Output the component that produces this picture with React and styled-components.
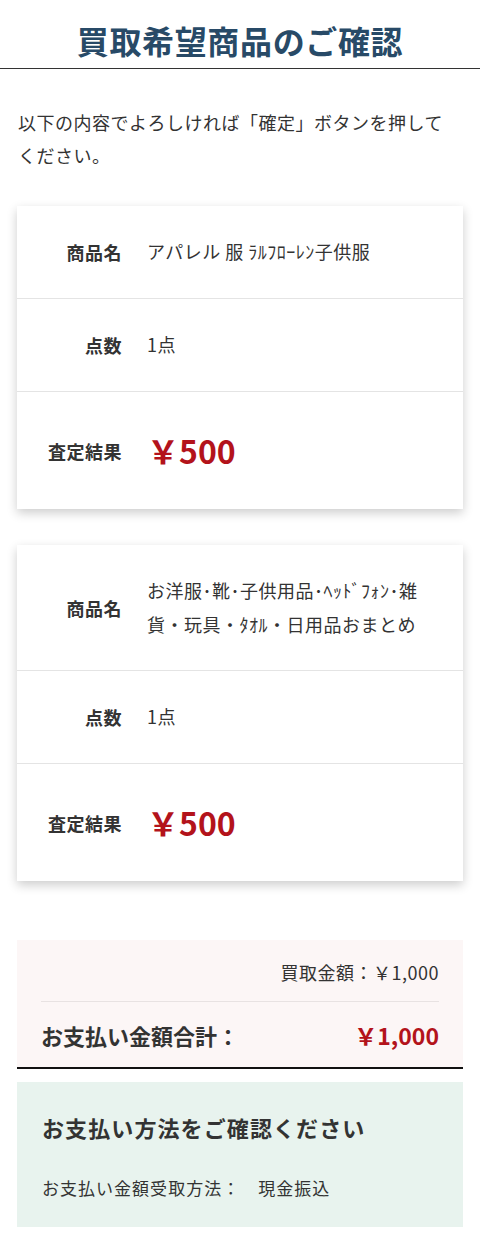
import React from "react";
import styled, { createGlobalStyle } from "styled-components";

const items = [
  {
    name: "アパレル 服 ﾗﾙﾌﾛｰﾚﾝ子供服",
    count: "1点",
    price: "￥500",
  },
  {
    name: "お洋服･靴･子供用品･ﾍｯﾄﾞﾌｫﾝ･雑貨・玩具・ﾀｵﾙ・日用品おまとめ",
    count: "1点",
    price: "￥500",
  },
];

export default function App() {
  return (
    <>
      <GlobalStyle />
      <Page>
        <Title>買取希望商品のご確認</Title>
        <Container>
          <Lead>
            以下の内容でよろしければ「確定」ボタンを押してください。
          </Lead>

          {items.map((item, i) => (
            <Card key={i}>
              <Row>
                <Label>商品名</Label>
                <Value>{item.name}</Value>
              </Row>
              <Row>
                <Label>点数</Label>
                <Value>{item.count}</Value>
              </Row>
              <Row>
                <Label>査定結果</Label>
                <Price>{item.price}</Price>
              </Row>
            </Card>
          ))}

          <Summary>
            <SubTotal>買取金額：￥1,000</SubTotal>
            <Total>
              <TotalLabel>お支払い金額合計：</TotalLabel>
              <TotalPrice>￥1,000</TotalPrice>
            </Total>
          </Summary>

          <PayBox>
            <PayTitle>お支払い方法をご確認ください</PayTitle>
            <PayText>
              お支払い金額受取方法：<PayMethod>現金振込</PayMethod>
            </PayText>
          </PayBox>
        </Container>
      </Page>
    </>
  );
}

const GlobalStyle = createGlobalStyle`
  body {
    margin: 0;
    background: #fff;
    font-family: "Noto Sans CJK JP", "Noto Sans", sans-serif;
    color: #333;
  }
`;

const Page = styled.div`
  width: 480px;
  padding-bottom: 19px;
`;

const Title = styled.h1`
  margin: 0;
  padding: 16px 0 4px;
  font-size: 32px;
  line-height: 48px;
  font-weight: 700;
  letter-spacing: 0.02em;
  color: #284a67;
  text-align: center;
  border-bottom: 1px solid #333;
`;

const Container = styled.div`
  padding: 0 17px;
`;

const Lead = styled.p`
  margin: 37px 0 34px;
  padding: 0 3px 0 1px;
  font-size: 18px;
  line-height: 33px;
  letter-spacing: 0.5px;
  color: #333;
`;

const Card = styled.div`
  background: #fff;
  box-shadow: 0 4px 10px rgba(0, 0, 0, 0.2);
  margin-bottom: 36px;
`;

const Row = styled.div`
  display: grid;
  grid-template-columns: 105px 1fr;
  column-gap: 25px;
  align-items: center;
  padding: 29px 36px 29px 0;
  & + & {
    border-top: 1px solid #e4e4e4;
  }
`;

const Label = styled.div`
  text-align: right;
  font-size: 18px;
  font-weight: 700;
  line-height: 34px;
  letter-spacing: 0.5px;
  color: #333;
`;

const Value = styled.div`
  font-size: 18px;
  line-height: 33.5px;
  letter-spacing: 0.5px;
  color: #333;
`;

const Price = styled.div`
  font-size: 32px;
  font-weight: 700;
  line-height: 59px;
  color: #b3131b;
`;

const Summary = styled.div`
  margin-top: 59px;
  background: #fcf6f6;
  padding: 17px 24px 15px;
  border-bottom: 2px solid #111;
`;

const SubTotal = styled.div`
  text-align: right;
  font-size: 18px;
  line-height: 30px;
  letter-spacing: 0.5px;
  padding-bottom: 14px;
  border-bottom: 1px solid #e8e2e2;
  color: #333;
`;

const Total = styled.div`
  display: flex;
  justify-content: space-between;
  align-items: center;
  padding-top: 16px;
  line-height: 34px;
`;

const TotalLabel = styled.span`
  font-size: 22px;
  font-weight: 700;
  color: #333;
`;

const TotalPrice = styled.span`
  font-size: 23px;
  font-weight: 700;
  color: #b3131b;
`;

const PayBox = styled.div`
  margin-top: 13px;
  background: #e8f3ee;
  padding: 28px 25px 25px;
`;

const PayTitle = styled.h2`
  margin: 0 0 30px;
  font-size: 22px;
  line-height: 34px;
  font-weight: 700;
  letter-spacing: 0.05em;
  color: #333;
`;

const PayText = styled.div`
  font-size: 17px;
  line-height: 28px;
  letter-spacing: 0.06em;
  color: #333;
`;

const PayMethod = styled.span`
  margin-left: 18px;
`;
